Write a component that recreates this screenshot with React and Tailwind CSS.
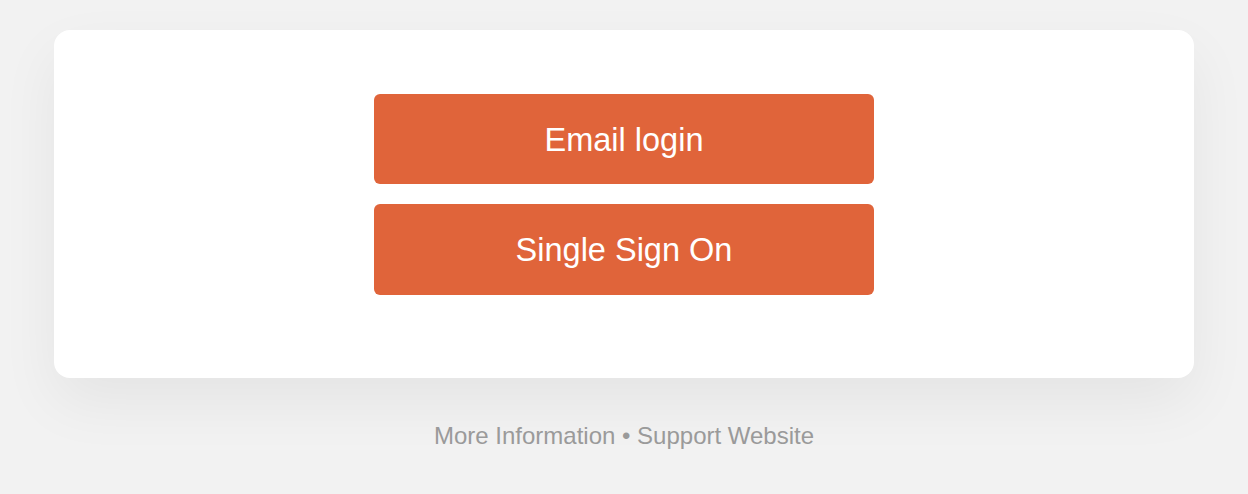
import React from "react"

export default function App() {
  return (
    <div
      className="min-h-[494px] bg-[#f2f2f2] px-[54px] pt-[30px]"
      style={{ fontFamily: '"Liberation Sans", Arial, sans-serif' }}
    >
      <div className="flex h-[348px] flex-col items-center gap-[20px] rounded-[16px] bg-white pt-[64px] shadow-[0_24px_60px_rgba(0,0,0,0.06)]">
        <button className="flex h-[90px] w-[500px] items-center justify-center rounded-[6px] bg-[#e0643a] pt-[2px] text-[32.5px] text-white">
          Email login
        </button>
        <button className="flex h-[91px] w-[500px] items-center justify-center rounded-[6px] bg-[#e0643a] pt-[2px] text-[32.5px] text-white">
          Single Sign On
        </button>
      </div>
      <div className="mt-[44px] text-center text-[24px] leading-[28px] text-[#9a9a9a]">
        <span>More Information</span> • <span>Support Website</span>
      </div>
    </div>
  )
}
